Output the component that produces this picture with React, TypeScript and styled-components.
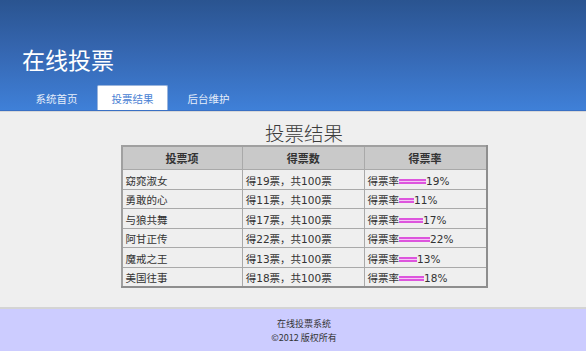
import React from "react";
import styled, { createGlobalStyle } from "styled-components";

const Global = createGlobalStyle`
  html, body { margin: 0; padding: 0; background: #efefef; }
  body { font-family: "DejaVu Sans", "Noto Sans CJK SC", sans-serif; font-size: 12px; color: #333; }
`;

const Page = styled.div`
  width: 586px;
  height: 351px;
  display: flex;
  flex-direction: column;
  overflow: hidden;
`;

const Header = styled.header`
  height: 111px;
  flex: none;
  background: linear-gradient(to bottom, #2a5490 0%, #3566b0 45%, #3f80d8 100%);
  border-bottom: 1px solid #3a70c4;
  display: flex;
  flex-direction: column;
  justify-content: flex-end;
  box-sizing: border-box;
`;

const Title = styled.h1`
  margin: 0 0 12px 22px;
  font-family: "Noto Sans CJK SC", sans-serif;
  font-weight: 400;
  font-size: 23px;
  line-height: 28px;
  color: #ffffff;
`;

const Nav = styled.nav`
  display: flex;
  padding-left: 21px;
  gap: 5px;
  height: 25px;
`;

const Tab = styled.a<{ $active?: boolean }>`
  width: 71px;
  box-sizing: border-box;
  display: flex;
  align-items: center;
  justify-content: center;
  font-family: "Noto Sans CJK SC", sans-serif;
  font-size: 10.5px;
  text-decoration: none;
  color: ${(p) => (p.$active ? "#4a82d4" : "#e6eefa")};
  background: ${(p) => (p.$active ? "#ffffff" : "transparent")};
  border: 1px solid ${(p) => (p.$active ? "#9bb5dc" : "transparent")};
  border-bottom: none;
  border-radius: 2px 2px 0 0;
`;

const Main = styled.main`
  flex: 1;
  border-top: 1px solid #d8d8d8;
  display: flex;
  flex-direction: column;
  align-items: center;
  padding: 9px 0 0 22px;
`;

const Heading = styled.h2`
  margin: 0;
  font-family: "Noto Sans CJK SC", sans-serif;
  font-weight: 300;
  font-size: 19.5px;
  line-height: 24px;
  color: #3a3a3a;
`;

const Table = styled.table`
  width: 367px;
  border-collapse: collapse;
  border: 2px solid #8e8e8e;
  border-top-color: #a0a0a0;
  border-left-color: #a0a0a0;
  font-size: 10.5px;
  color: #333;
`;

const Th = styled.th`
  background: #c9c9c9;
  height: 22px;
  padding: 0;
  font-family: "Noto Sans CJK SC", sans-serif;
  font-weight: 700;
  font-size: 11px;
  line-height: 14px;
  color: #333;
  border: 1px solid #a9a9a9;
  width: 122px;
`;

const Td = styled.td`
  height: 19.5px;
  padding: 0 3px 1px 3px;
  line-height: 14px;
  border: 1px solid #a9a9a9;
  vertical-align: bottom;
  box-sizing: border-box;
  white-space: nowrap;
`;

const Bar = styled.span`
  display: inline-block;
  height: 5px;
  vertical-align: 1px;
  box-sizing: border-box;
  border-top: 2px solid #dd55dd;
  border-bottom: 2px solid #dd55dd;
  background: #f4c8f4;
`;

const Footer = styled.footer`
  flex: none;
  height: 44px;
  box-sizing: border-box;
  border-top: 2px solid #d4d4d4;
  background: #ccccff;
  display: flex;
  flex-direction: column;
  align-items: center;
  justify-content: center;
  font-family: "Noto Sans CJK SC", sans-serif;
  font-size: 9px;
  line-height: 14px;
  color: #333;
  padding: 2px 0 0 22px;
`;

const rows = [
  { name: "窈窕淑女", votes: 19 },
  { name: "勇敢的心", votes: 11 },
  { name: "与狼共舞", votes: 17 },
  { name: "阿甘正传", votes: 22 },
  { name: "魔戒之王", votes: 13 },
  { name: "美国往事", votes: 18 },
];

export default function App() {
  return (
    <Page>
      <Global />
      <Header>
        <Title>在线投票</Title>
        <Nav>
          <Tab>系统首页</Tab>
          <Tab $active>投票结果</Tab>
          <Tab>后台维护</Tab>
        </Nav>
      </Header>
      <Main>
        <Heading>投票结果</Heading>
        <Table>
          <thead>
            <tr>
              <Th>投票项</Th>
              <Th>得票数</Th>
              <Th>得票率</Th>
            </tr>
          </thead>
          <tbody>
            {rows.map((r) => (
              <tr key={r.name}>
                <Td>{r.name}</Td>
                <Td>得{r.votes}票，共100票</Td>
                <Td>
                  得票率
                  <Bar style={{ width: Math.round(r.votes * 1.4) }} />
                  {r.votes}%
                </Td>
              </tr>
            ))}
          </tbody>
        </Table>
      </Main>
      <Footer>
        <div>在线投票系统</div>
        <div>©2012 版权所有</div>
      </Footer>
    </Page>
  );
}
